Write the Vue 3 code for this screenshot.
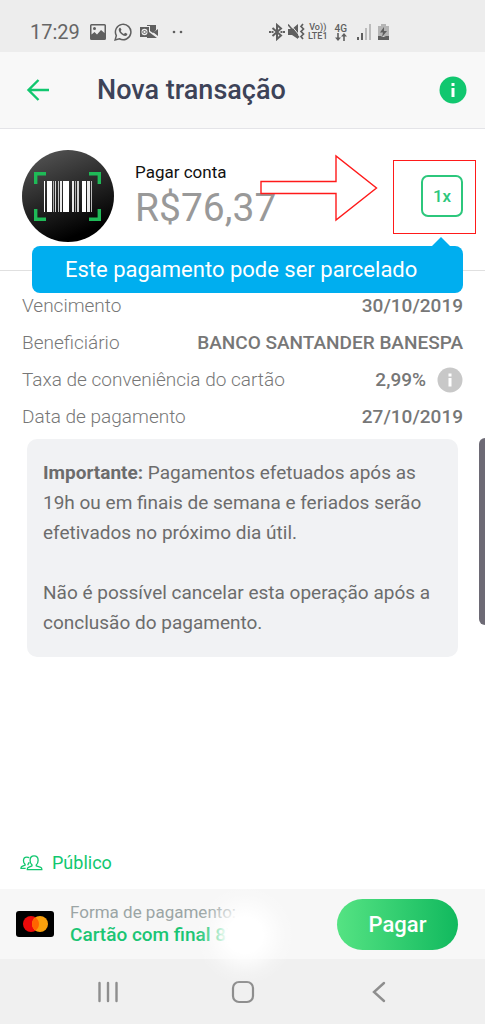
<script setup>
const details = [
  { label: 'Vencimento', value: '30/10/2019' },
  { label: 'Beneficiário', value: 'BANCO SANTANDER BANESPA' },
  { label: 'Taxa de conveniência do cartão', value: '2,99%', info: true },
  { label: 'Data de pagamento', value: '27/10/2019' },
]
// [x, width, opacity] of each barcode stripe
const bars = [
  [0, 1, 1], [3, 5, 1], [9, 1, 0.6], [11, 1, 0.8], [14, 1, 0.7], [16, 2, 0.9], [19, 6, 1],
  [28, 2, 0.9], [31, 1, 0.6], [33, 2, 0.8], [38, 4, 1], [43, 3, 0.9], [47, 1, 0.7],
]
</script>

<template>
  <div class="screen">
    <div class="status">
      <span class="clock">17:29</span>
      <svg class="s-img" width="16" height="16" viewBox="0 0 16 16">
        <path fill="#5f5f5f" fill-rule="evenodd" d="M1.500 0h13a1.500 1.500 0 0 1 1.500 1.500v13a1.500 1.500 0 0 1-1.500 1.500h-13A1.500 1.500 0 0 1 0 14.500v-13A1.500 1.500 0 0 1 1.500 0zM1.500 1.500v9l3-2.500 2.500 2.500 4-4.500 3.500 3V1.500z" />
        <circle cx="4.500" cy="4.500" r="1.500" fill="#5f5f5f" />
      </svg>
      <svg class="s-wa" width="18" height="18" viewBox="0 0 24 24">
        <path fill="none" stroke="#5f5f5f" stroke-width="2" d="M1.500 22.500l1.600-5.700A10.300 10.300 0 1 1 7.200 21z" />
        <path fill="#5f5f5f" d="M8.500 6.200c-.5-.1-1 .1-1.300.5-2 2.200-.6 5.300 2.300 8 2.800 2.500 6 3.600 7.700 1.700.5-.6.700-1.400.5-2l-2.900-1.400-1.500 1.500c-1.900-.7-3.500-2.200-4.300-3.900l1-1.500z" />
      </svg>
      <svg class="s-out" width="18" height="16" viewBox="0 0 18 16">
        <path fill="#5f5f5f" d="M7 1h9v5l-3 3-3-2V2H7zM9 8l8 6H7v-2h2zM18 5v7l-4.500-3.500z" />
        <path fill="#5f5f5f" fill-rule="evenodd" d="M0 3h9v10H0zM4.500 4.800a3 3.200 0 1 0 0 6.400 3 3.200 0 1 0 0-6.400z" />
        <path fill="none" stroke="#5f5f5f" d="M4.500 6l2 2-2 2-2-2z" />
      </svg>
      <svg class="s-dots" width="12" height="4" viewBox="0 0 12 4" fill="#5f5f5f"><circle cx="2" cy="2" r="1.300" /><circle cx="9" cy="2" r="1.300" /></svg>
      <div class="status-right">
        <svg width="16" height="18" viewBox="0 0 16 18">
          <path fill="none" stroke="#5f5f5f" stroke-width="2" d="M3.500 5l8.500 7.500L8 16V2l4 3.500L3.500 13" />
          <path fill="#5f5f5f" d="M0 8h2v2H0zM14 8h2v2h-2zM2.500 8h2v2h-2zM11.500 8h2v2h-2z" />
        </svg>
        <svg width="17" height="18" viewBox="0 0 17 18">
          <path fill="#5f5f5f" d="M0 6h4l6-5v15l-6-4H0z" />
          <path stroke="#ededed" d="M2 1l10 12" />
          <path stroke="#5f5f5f" stroke-width="1.500" d="M0 1.500l11 13" />
          <path fill="none" stroke="#5f5f5f" stroke-width="1.700" d="M15 1l-2 2.500 2.500 2.500L13 8.500l2.500 2.500-2.500 2.500 2 2.500" />
        </svg>
        <span class="net"><span>Vo))</span><span>LTE1</span></span>
        <span class="net net-4g"><span>4G</span>
          <svg width="12" height="8" viewBox="0 0 12 8" fill="#5f5f5f"><path d="M2.200 0h1.600v4.500H6L3 8 0 4.500h2.200zM8.200 8h1.600V3.500H12L9 0 6 3.500h2.200z" /></svg>
        </span>
        <svg class="s-signal" width="15" height="16" viewBox="0 0 15 16">
          <path fill="#5f5f5f" d="M0 13h2v3H0zM4 9h2v7H4z" /><path fill="#bcbcbc" d="M8 4h2v12H8zM12 0h2v16h-2z" />
        </svg>
        <svg width="11" height="16" viewBox="0 0 11 16">
          <path fill="#b5b5b5" d="M3 0h5v2h3v10H0V2h3z" /><path fill="#5f5f5f" d="M0 12h3l2 1 3-1h3v4H0zM6 3L2 8.500h3L4 13l5-6H6z" />
        </svg>
      </div>
    </div>

    <header class="bar">
      <button class="icon-btn" aria-label="Voltar">
        <svg width="24" height="24" viewBox="0 0 24 24" fill="none" stroke="#11c76f" stroke-width="2.400"><path d="M12.500 2L2.500 12l10 10M2.500 12H23" /></svg>
      </button>
      <h1>Nova transação</h1>
      <button class="icon-btn" aria-label="Informações">
        <svg width="28" height="28" viewBox="0 0 28 28"><circle cx="14" cy="14" r="13.500" fill="#11c76f" /><path fill="#fff" d="M12.500 7h3v3h-3zM12.500 12h3v9h-3z" /></svg>
      </button>
    </header>

    <main>
      <section class="summary">
        <svg class="badge" width="92" height="92" viewBox="0 0 92 92">
          <defs>
            <linearGradient id="dark" x1="0.300" y1="0" x2="0.700" y2="1">
              <stop offset="0" stop-color="#515151" /><stop offset="0.900" stop-color="#000" />
            </linearGradient>
          </defs>
          <circle cx="46" cy="46" r="46" fill="url(#dark)" />
          <path fill="none" stroke="#1fba57" stroke-width="3.400" d="M13.700 34V23.700H24M67 23.700h10.300V34M77.300 59v10.300H67M24 69.300H13.700V59" />
          <rect v-for="b in bars" :key="b[0]" :x="b[0] + 22" y="31" :width="b[1]" height="31" fill="#fff" :fill-opacity="b[2]" />
        </svg>
        <div class="amount">
          <p class="kind">Pagar conta</p>
          <p class="price">R$76,37</p>
        </div>
        <button class="times">1x</button>
        <div class="mark-box"></div>
        <svg class="mark-arrow" width="118" height="68" viewBox="0 0 118 68" fill="none" stroke="#ff1a1a" stroke-width="1.400"><path d="M1 27.500h75V2l40.500 32L76 66V39.500H1z" /></svg>
        <div class="tip" role="tooltip">Este pagamento pode ser parcelado</div>
      </section>

      <dl class="details">
        <div v-for="d in details" :key="d.label" class="row">
          <dt>{{ d.label }}</dt>
          <dd>{{ d.value }}
            <svg v-if="d.info" width="26" height="26" viewBox="0 0 26 26"><circle cx="13" cy="13" r="12.500" fill="#c8c8c8" /><path fill="#fff" d="M11.500 6.500h3v3h-3zM11.500 11h3v8.500h-3z" /></svg>
          </dd>
        </div>
      </dl>

      <section class="notice">
        <p><strong>Importante:</strong> Pagamentos efetuados após as 19h ou em finais de semana e feriados serão efetivados no próximo dia útil.</p>
        <p>Não é possível cancelar esta operação após a conclusão do pagamento.</p>
      </section>

      <button class="privacy">
        <svg width="23" height="17" viewBox="0 0 24 18" fill="none" stroke="#11c76f" stroke-width="1.400" stroke-linejoin="round">
          <path d="M12.500 10.500C11 9.500 10.500 7.500 10.500 5.500c0-2.800 1.600-4.500 4.200-4.500S19 2.700 19 5.500c0 2-.6 4-2 5v1l4.800 1.500c.9.300 1.200 1 1.200 2.500H7.500c0-1.500.3-2.200 1.200-2.500l3.800-1.500z" />
          <path d="M9.500 3.200C9 2.400 8 2.200 7 2.200 4.800 2.200 3.500 3.700 3.500 6c0 1.700.6 3 1.700 3.800v1L2 12c-.9.400-1.200 1-1.200 2.200h5M9.500 7.500c-.2 1-.6 1.700-1.200 2.300v1" />
        </svg>
        Público
      </button>
    </main>

    <footer class="pay">
      <svg class="card" width="38" height="26" viewBox="0 0 38 26">
        <rect width="38" height="26" rx="3" fill="#000" /><circle cx="15" cy="13" r="8" fill="#eb0a0a" /><circle cx="24" cy="13" r="8" fill="#f99f0c" />
        <path fill="#ff6500" d="M19.500 6.400a8 8 0 0 1 0 13.200 8 8 0 0 1 0-13.200z" />
      </svg>
      <div class="method">
        <p class="method-label">Forma de pagamento:</p>
        <p class="method-card">Cartão com final 87</p>
      </div>
      <button class="pay-btn">Pagar</button>
      <div class="glow"></div>
    </footer>

    <nav class="nav">
      <button aria-label="Recentes"><svg width="24" height="24" viewBox="0 0 24 24" stroke="#8e8e8e" stroke-width="2.400" stroke-linecap="round"><path d="M3.500 3v18M12 3v18M20.500 3v18" /></svg></button>
      <button aria-label="Início"><svg width="24" height="24" viewBox="0 0 24 24" fill="none" stroke="#8e8e8e" stroke-width="2.200"><rect x="2" y="2" width="20" height="20" rx="6" /></svg></button>
      <button aria-label="Voltar"><svg width="24" height="24" viewBox="0 0 24 24" fill="none" stroke="#8e8e8e" stroke-width="2.400" stroke-linecap="round"><path d="M18 3L8 12l10 9" /></svg></button>
    </nav>
    <div class="edge"></div>
  </div>
</template>

<style>
body { margin: 0; background: #fff; }
</style>

<style scoped>
.screen {
  position: relative;
  display: flex;
  flex-direction: column;
  min-height: 100vh;
  overflow: hidden;
  font-family: Roboto, "Liberation Sans", sans-serif;
  color: #6b6b6b;
}
p, h1, dl, dd { margin: 0; }
svg { display: block; flex: none; }
button { padding: 0; border: 0; background: none; font: inherit; cursor: pointer; }

.status {
  display: flex;
  align-items: center;
  box-sizing: border-box;
  height: 52px;
  padding: 12px 96px 0 30px;
  background: #ededed;
}
.clock { font-size: 20px; color: #666; }
.s-img { margin-left: 10px; }
.s-wa { margin-left: 8px; }
.s-out { margin-left: 8px; }
.s-dots { margin-left: 14px; }
.status-right { display: flex; align-items: center; gap: 3px; margin-left: auto; }
.net {
  display: flex;
  flex-direction: column;
  align-items: center;
  font-size: 9px;
  line-height: 9px;
  font-weight: 500;
  color: #5f5f5f;
}
.net-4g { margin: 0 4px; font-size: 10px; }
.s-signal { margin: 0 3px; }

.bar {
  display: flex;
  align-items: center;
  height: 76px;
  padding: 0 18px 0 26px;
  background: #f8f8f8;
  border-bottom: 1px solid #e4e4e8;
}
h1 {
  flex: 1;
  margin-left: 47px;
  font-size: 27px;
  line-height: 32px;
  font-weight: 500;
  color: #3d4358;
}

main { display: flex; flex-direction: column; flex: 1; }
.summary {
  position: relative;
  display: flex;
  padding: 21px 22px 28px;
  border-bottom: 1px solid #e0e0e0;
}
.amount { flex: 1; margin: 10px 0 0 21px; }
.kind { font-size: 17px; line-height: 24px; color: #111; }
.price { font-size: 39px; line-height: 48px; color: #999; }
.times {
  box-sizing: border-box;
  width: 42px;
  height: 42px;
  margin-top: 25px;
  border: 2px solid #2cc77c;
  border-radius: 7px;
  font-size: 17px;
  font-weight: 500;
  color: #2cc77c;
}
.mark-box {
  position: absolute;
  top: 31px;
  right: 9px;
  width: 81px;
  height: 72px;
  border: 1px solid #ff1a1a;
}
.mark-arrow { position: absolute; top: 25px; right: 107px; }
.tip {
  position: absolute;
  top: 117px;
  left: 32px;
  right: 22px;
  z-index: 1;
  box-sizing: border-box;
  padding-left: 33px;
  border-radius: 8px;
  background: #00aeef;
  font-size: 22px;
  line-height: 47px;
  white-space: nowrap;
  color: #fff;
}
.tip::before {
  content: "";
  position: absolute;
  right: 13px;
  top: -9px;
  border: 9px solid transparent;
  border-top: 0;
  border-bottom-color: #00aeef;
}

.details { padding: 16px 22px 0; font-size: 19px; }
.row { display: flex; align-items: center; justify-content: space-between; height: 37px; }
dt { font-weight: 300; color: #777; }
dd { display: flex; align-items: center; gap: 11px; font-weight: 500; color: #777; }

.notice {
  display: grid;
  gap: 30px;
  margin: 4px 27px 0;
  padding: 19px 16px;
  border-radius: 10px;
  background: #f1f2f4;
  font-size: 19px;
  line-height: 30px;
  color: #6c6c6c;
}
strong { font-weight: 700; }
.privacy {
  display: flex;
  align-items: center;
  align-self: flex-start;
  gap: 9px;
  margin: auto 0 14px 20px;
  font-size: 18px;
  line-height: 24px;
  color: #11c76f;
}

.pay {
  position: relative;
  display: flex;
  align-items: center;
  height: 70px;
  padding: 0 27px 0 16px;
  background: #f7f7f7;
}
.method { flex: 1; margin-left: 16px; white-space: nowrap; }
.method-label { font-size: 17px; line-height: 22px; color: #9ba5a5; }
.method-card { font-size: 19px; line-height: 24px; font-weight: 500; color: #1bc574; }
.pay-btn {
  width: 121px;
  height: 51px;
  border-radius: 26px;
  background: linear-gradient(90deg, #55e383, #11b95e);
  font-size: 22px;
  font-weight: 500;
  color: #fff;
}
.glow {
  position: absolute;
  top: -4px;
  left: 50%;
  width: 100px;
  height: 100px;
  margin-left: -48px;
  background: radial-gradient(closest-side, #fff 36%, rgba(255, 255, 255, 0.6) 56%, rgba(255, 255, 255, 0.2) 78%, rgba(255, 255, 255, 0));
  pointer-events: none;
}

.nav {
  display: flex;
  align-items: center;
  justify-content: space-around;
  height: 65px;
  padding: 0 40px;
  background: #f0f0f0;
}
.edge {
  position: absolute;
  top: 438px;
  right: 0;
  width: 6px;
  height: 187px;
  border-radius: 6px 0 0 6px;
  background: #6d6a75;
}
</style>
